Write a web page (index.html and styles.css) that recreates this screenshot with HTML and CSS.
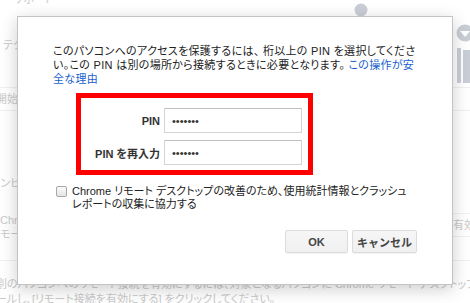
FILE: index.html
```html
<!DOCTYPE html>
<html lang="ja">
<head>
<meta charset="UTF-8" />
<title>PIN の設定</title>
<link rel="stylesheet" href="styles.css">
</head>
<body>

<!-- page behind the dialog -->
<div class="page">
    <header class="page-head">
        <div class="head-left">
            <div class="head-title">サポート</div>
            <div class="head-sub">テクニカル サポート</div>
        </div>
        <svg class="head-icons" width="130" height="87" viewBox="0 0 130 87">
            <circle cx="21" cy="10" r="6.5" fill="#c9ced6"/>
            <circle cx="58" cy="25" r="9" fill="#c9ced6"/>
            <circle cx="125" cy="33" r="8.5" fill="#c9ced6"/>
            <path d="M120 31 L130 31 L125 37 Z" fill="#fff"/>
            <rect x="117" y="48" width="4" height="35" fill="#c9ced6"/>
            <rect x="123" y="50" width="7" height="33" fill="#c9ced6"/>
        </svg>
    </header>

    <div class="share-row"><span class="cut">開始</span></div>

    <div class="hosts">
        <div class="hosts-left">
            <div class="host-name">コンピュータ</div>
            <div class="host-desc">Chrome リ</div>
            <div class="host-desc">モート デスクトップ</div>
        </div>
        <div class="hosts-right">有効にする</div>
    </div>

    <p class="page-foot">別のパソコンへのリモート接続を有効にするには、対象となるパソコンに Chrome リモート デスクトップ アプリをインスト<br>ールし、[リモート接続を有効にする] をクリックしてください。</p>
</div>

<!-- PIN dialog -->
<div class="dialog">
    <p class="intro">このパソコンへのアクセスを保護するには、 桁以上の PIN を選択してください。この PIN は別の場所から接続するときに必要となります。 <a href="#">この操作が安全な理由</a></p>

    <div class="pin-box">
        <label class="pin-label" for="pin">PIN</label>
        <input class="pin-input" id="pin" type="password" value="1234567">
        <label class="pin-label" for="pin2">PIN を再入力</label>
        <input class="pin-input" id="pin2" type="password" value="1234567">
    </div>

    <label class="consent">
        <span class="check"></span>
        <span class="consent-text">Chrome リモート デスクトップの改善のため、使用統計情報とクラッシュ レポートの収集に協力する</span>
    </label>

    <div class="actions">
        <button class="btn btn-ok">OK</button>
        <button class="btn btn-cancel">キャンセル</button>
    </div>
</div>

</body>
</html>
```

FILE: styles.css
```css
*{
    box-sizing:border-box;
}

body{
    margin:0;
    width:470px;
    height:303px;
    overflow:hidden;
    background:#fff;
    font-family:"Liberation Sans","Noto Sans CJK JP",sans-serif;
    font-feature-settings:"palt";
}

/* page behind */

.page{
    height:303px;
    color:#c9c9c9;
    font-size:11px;
    line-height:14px;
    white-space:nowrap;
    overflow:hidden;
}

.page-head{
    display:flex;
    justify-content:space-between;
    height:88px;
    border-bottom:1px solid #f0f0f0;
}

.head-title{
    margin:-8px 0 0 13px;
}

.head-sub{
    margin:32px 0 0 3px;
}

.share-row{
    height:23px;
    display:flex;
    align-items:center;
    border-bottom:1px solid #f0f0f0;
}

.cut{
    margin-left:-4px;
}

.hosts{
    display:flex;
    justify-content:space-between;
    height:150px;
    border-bottom:1px solid #f0f0f0;
}

.host-name{
    margin:65px 0 0 -10px;
}

.host-name + .host-desc{
    margin-top:23px;
}

.hosts-right{
    width:17px;
    height:24px;
    margin-top:102px;
    padding-top:4px;
    overflow:hidden;
    border-top:1px solid #f0f0f0;
    border-bottom:1px solid #f0f0f0;
}

.page-foot{
    margin:16px 0 0 -4px;
    line-height:15px;
}

/* dialog */

.dialog{
    position:absolute;
    left:17px;
    top:16px;
    width:436px;
    height:269px;
    padding:27px 35px 0 35px;
    background:#fff;
    border:1px solid #c4c4c4;
    box-shadow:0 4px 16px rgba(0,0,0,0.2);
    color:#222;
    font-size:11px;
}

.intro{
    margin:0;
    line-height:14px;
    letter-spacing:0.3px;
}

.intro a{
    color:#1a5fd0;
    text-decoration:none;
}

.pin-box{
    width:237px;
    margin:7px 0 0 23px;
    padding:10px 6px 5px 0;
    border:5px solid #ff0000;
    display:grid;
    grid-template-columns:1fr 138px;
    column-gap:4px;
    row-gap:7px;
    align-items:center;
}

.pin-label{
    text-align:right;
    font-weight:bold;
    color:#333;
    font-size:11px;
}

.pin-input{
    height:25px;
    width:138px;
    margin:0;
    padding:0 7px;
    border:1px solid #d4d4d4;
    border-top-color:#c0c0c0;
    font-family:"Liberation Sans",sans-serif;
    font-size:11px;
    color:#333;
    outline:none;
}

.consent{
    display:flex;
    align-items:flex-start;
    gap:5px;
    margin:10px 0 0 3px;
    line-height:13px;
}

.check{
    flex:none;
    width:11px;
    height:11px;
    margin-top:1px;
    border:1px solid #a8a8a8;
    border-radius:2px;
    background:linear-gradient(#fbfbfb,#e4e4e4);
}

.actions{
    display:flex;
    justify-content:flex-end;
    gap:4px;
    margin-top:19px;
}

.btn{
    height:23px;
    padding:0;
    border:1px solid #dcdcdc;
    border-radius:2px;
    background:linear-gradient(#f6f6f6,#f0f0f0);
    box-shadow:0 1px 1px rgba(0,0,0,0.05);
    color:#444;
    font-family:"Liberation Sans","Noto Sans CJK JP",sans-serif;
    font-size:11px;
    font-weight:bold;
}

.btn-ok{
    width:63px;
}

.btn-cancel{
    width:65px;
}
```
